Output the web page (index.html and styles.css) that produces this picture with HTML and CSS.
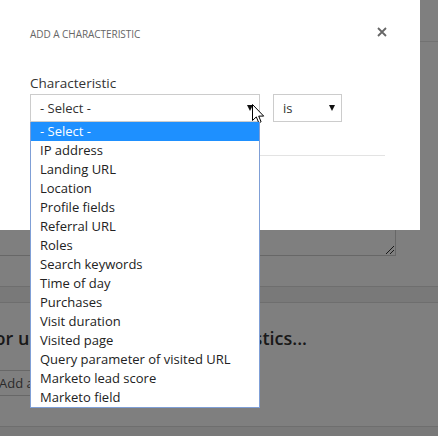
FILE: index.html
```html
<!DOCTYPE html>
<html>
<head>
<meta charset="utf-8">
<link rel="stylesheet" href="styles.css">
</head>
<body>
<div class="page">
  <div class="topbar"></div>
  <div class="content">
    <div class="textarea"><span class="grip"></span></div>
  </div>
  <div class="bar"></div>
  <div class="content">
    <h2 class="heading">for users with these characteristics...</h2>
    <div class="input">Add a characteristic</div>
  </div>
  <div class="footer"></div>
</div>
<div class="overlay"></div>
<div class="modal">
  <div class="modal-head">
    <span class="modal-title">ADD A CHARACTERISTIC</span>
    <svg class="close" width="10" height="10" viewBox="0 0 10 10"><path d="M1 1L9 9M9 1L1 9" stroke="#666" stroke-width="1.8" fill="none"/></svg>
  </div>
  <div class="field">
    <label class="label">Characteristic</label>
    <div class="row">
      <div class="select wide">
        <span>- Select -</span><span class="arrow"></span>
        <ul class="options">
          <li class="selected">- Select -</li>
          <li>IP address</li>
          <li>Landing URL</li>
          <li>Location</li>
          <li>Profile fields</li>
          <li>Referral URL</li>
          <li>Roles</li>
          <li>Search keywords</li>
          <li>Time of day</li>
          <li>Purchases</li>
          <li>Visit duration</li>
          <li>Visited page</li>
          <li>Query parameter of visited URL</li>
          <li>Marketo lead score</li>
          <li>Marketo field</li>
        </ul>
      </div>
      <div class="select narrow"><span>is</span><span class="arrow"></span></div>
    </div>
  </div>
  <div class="divider"></div>
</div>
<svg class="cursor" width="13" height="21" viewBox="0 0 13 21"><path d="M0.5 0.5V16.5L4.3 12.9L6.8 18.8L9.1 17.8L6.7 12.1H11.7Z" fill="#fff" stroke="#000" stroke-width="1" stroke-linejoin="miter"/></svg>
</body>
</html>
```
FILE: styles.css
```css
html, body {
  margin: 0;
  padding: 0;
}
body {
  width: 438px;
  height: 436px;
  overflow: hidden;
  position: relative;
  font-family: "Open Sans", "DejaVu Sans", sans-serif;
  background: #fff;
}
.page {
  display: flex;
  flex-direction: column;
  height: 436px;
  background: #fff;
}
.topbar {
  height: 41px;
  border-bottom: 1px solid #e4e4e4;
  flex: none;
}
.content {
  margin-left: -20px;
  width: 416px;
}
.textarea {
  margin-top: 20px;
  height: 194px;
  box-sizing: border-box;
  border: 1px solid #cfcfcf;
  position: relative;
}
.grip {
  position: absolute;
  right: 1px;
  bottom: 1px;
  width: 8px;
  height: 8px;
  background: linear-gradient(135deg, transparent 45%, #333 45%, #333 55%, transparent 55%, transparent 70%, #333 70%, #333 80%, transparent 80%);
}
.bar {
  margin-top: 30px;
  height: 15px;
  border-top: 1px solid #dcdcdc;
  border-bottom: 1px solid #dcdcdc;
  background: #f3f3f3;
  flex: none;
}
.heading {
  margin: 21px 0 0 8px;
  font-size: 18px;
  font-weight: 600;
  color: #333;
  line-height: 28px;
  white-space: nowrap;
}
.input {
  margin-top: 18px;
  width: 200px;
  height: 26px;
  box-sizing: border-box;
  border: 1px solid #cfcfcf;
  border-left: none;
  font-size: 13px;
  color: #555;
  line-height: 24px;
  padding-left: 19px;
}
.footer {
  margin-top: 30px;
  flex: 1;
  border-top: 1px solid #dcdcdc;
  background: #f3f3f3;
}
.overlay {
  position: absolute;
  inset: 0;
  background: rgba(0, 0, 0, 0.5);
}
.modal {
  position: absolute;
  left: 0;
  top: 0;
  width: 420px;
  height: 230px;
  background: #fff;
  box-sizing: border-box;
  padding: 0 35px 0 30px;
}
.modal-head {
  display: flex;
  justify-content: space-between;
  align-items: center;
  padding-top: 24px;
  height: 16px;
}
.modal-title {
  font-size: 10px;
  color: #666;
  letter-spacing: -0.05px;
  margin-top: 4px;
}
.close {
  display: block;
  margin-right: -2px;
}
.field {
  margin-top: 34px;
}
.label {
  display: block;
  font-size: 13.5px;
  color: #333;
  line-height: 18px;
  margin-bottom: 2px;
}
.row {
  display: flex;
  gap: 13px;
}
.select {
  position: relative;
  height: 28px;
  box-sizing: border-box;
  border: 1px solid #ccc;
  display: flex;
  align-items: center;
  justify-content: space-between;
  padding: 0 6px 0 9px;
  font-size: 13px;
  color: #333;
}
.wide { width: 230px; }
.narrow { width: 69px; }
.arrow {
  width: 0;
  height: 0;
  border-left: 3.5px solid transparent;
  border-right: 3.5px solid transparent;
  border-top: 6px solid #111;
}
.options {
  position: absolute;
  left: -1px;
  top: 27px;
  width: 230px;
  box-sizing: border-box;
  margin: 0;
  padding: 0;
  list-style: none;
  background: #fff;
  border: 1px solid #7f9fd6;
  border-top: none;
  z-index: 2;
}
.options li {
  height: 19px;
  line-height: 19px;
  padding-left: 9px;
  font-size: 13px;
  color: #222;
}
.options li.selected {
  background: #1e90ff;
  color: #fff;
}
.divider {
  margin-top: 33px;
  height: 1px;
  background: #e3e3e3;
  width: 355px;
}
.cursor {
  position: absolute;
  left: 252px;
  top: 104px;
}
```
